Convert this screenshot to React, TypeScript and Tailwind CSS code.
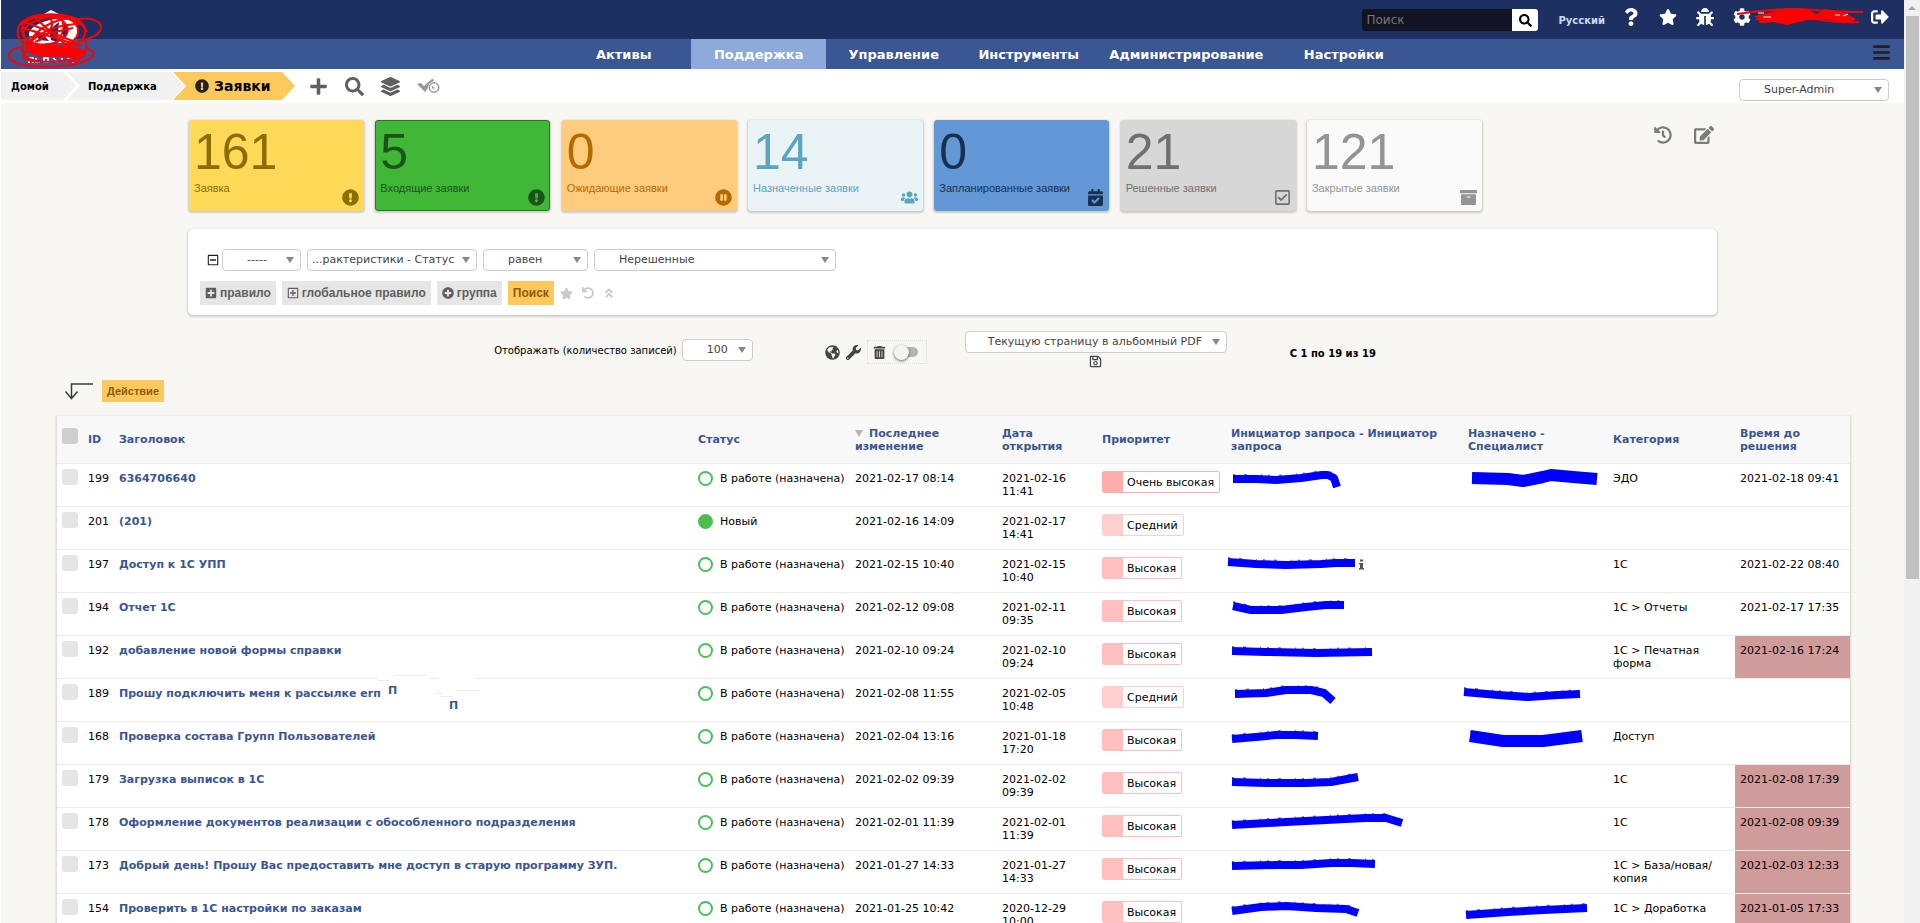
import type { ReactNode } from "react";
import {
  FaAngleDoubleUp, FaArchive, FaBars, FaBug, FaCalendarCheck, FaCog, FaEdit, FaExclamationCircle, FaGlobeAmericas,
  FaHistory, FaLayerGroup, FaPauseCircle, FaPlus, FaPlusCircle, FaPlusSquare, FaQuestion, FaRegCheckSquare,
  FaRegMinusSquare, FaRegPlusSquare, FaRegSave, FaSearch, FaSignOutAlt, FaStar, FaTrashAlt,
  FaUndo, FaUsers, FaWrench,
} from "react-icons/fa";

type Mark = { d: string; w: number; info?: number };
type Row = {
  id: number;
  title: string;
  isNew?: boolean;
  modified: string;
  opened: string;
  priority: "Очень высокая" | "Высокая" | "Средний";
  requester?: Mark;
  assignee?: Mark;
  category: string;
  due: string;
  late?: boolean;
};

const rows: Row[] = [
  { id: 199, title: "6364706640", modified: "2021-02-17 08:14", opened: "2021-02-16 11:41", priority: "Очень высокая", requester: { d: "M7 15 L30 15 L50 16 L75 14 L96 11 L102 11 L108 14 L111 23", w: 8 }, assignee: { d: "M9 14 L45 15 L60 17 L80 13 L88 11 L110 13 L134 15", w: 12 }, category: "ЭДО", due: "2021-02-18 09:41" },
  { id: 201, title: "(201)", isNew: true, modified: "2021-02-16 14:09", opened: "2021-02-17 14:41", priority: "Средний", category: "", due: "" },
  { id: 197, title: "Доступ к 1С УПП", modified: "2021-02-15 10:40", opened: "2021-02-15 10:40", priority: "Высокая", requester: { d: "M2 12 L30 14 L60 15 L95 14 L110 13 L129 13", w: 8, info: 134 }, category: "1С", due: "2021-02-22 08:40" },
  { id: 194, title: "Отчет 1С", modified: "2021-02-12 09:08", opened: "2021-02-11 09:35", priority: "Высокая", requester: { d: "M7 13 L25 17 L55 17 L80 14 L100 12 L118 12", w: 8 }, category: "1С > Отчеты", due: "2021-02-17 17:35" },
  { id: 192, title: "добавление новой формы справки", modified: "2021-02-10 09:24", opened: "2021-02-10 09:24", priority: "Высокая", requester: { d: "M6 15 L40 16 L90 17 L146 16", w: 8 }, category: "1С > Печатная форма", due: "2021-02-16 17:24", late: true },
  { id: 189, title: "Прошу подключить меня к рассылке erп", modified: "2021-02-08 11:55", opened: "2021-02-05 10:48", priority: "Средний", requester: { d: "M9 15 L40 14 L60 11 L85 11 L98 14 L107 22", w: 8 }, assignee: { d: "M1 13 L35 16 L65 18 L95 16 L117 15", w: 8 }, category: "", due: "" },
  { id: 168, title: "Проверка состава Групп Пользователей", modified: "2021-02-04 13:16", opened: "2021-01-18 17:20", priority: "Высокая", requester: { d: "M6 17 L30 15 L50 13 L70 13 L92 14", w: 8 }, assignee: { d: "M7 14 L40 19 L80 19 L119 14", w: 12 }, category: "Доступ", due: "" },
  { id: 179, title: "Загрузка выписок в 1С", modified: "2021-02-02 09:39", opened: "2021-02-02 09:39", priority: "Высокая", requester: { d: "M6 17 L40 18 L80 18 L105 17 L132 12", w: 8 }, category: "1С", due: "2021-02-08 17:39", late: true },
  { id: 178, title: "Оформление документов реализации с обособленного подразделения", modified: "2021-02-01 11:39", opened: "2021-02-01 11:39", priority: "Высокая", requester: { d: "M6 17 L60 14 L100 12 L140 10 L160 10 L176 15", w: 8 }, category: "1С", due: "2021-02-08 09:39", late: true },
  { id: 173, title: "Добрый день! Прошу Вас предоставить мне доступ в старую программу ЗУП.", modified: "2021-01-27 14:33", opened: "2021-01-27 14:33", priority: "Высокая", requester: { d: "M6 15 L50 14 L75 14 L105 12 L125 12 L149 13", w: 8 }, category: "1С > База/новая/копия", due: "2021-02-03 12:33", late: true },
  { id: 154, title: "Проверить в 1С настройки по заказам", modified: "2021-01-25 10:42", opened: "2020-12-29 10:00", priority: "Высокая", requester: { d: "M6 17 L35 13 L60 12 L90 14 L120 15 L132 19", w: 8 }, assignee: { d: "M3 21 L45 18 L80 16 L124 14", w: 8 }, category: "1С > Доработка", due: "2021-01-05 17:33", late: true },
];

const cards = [
  { n: "161", label: "Заявка", icon: FaExclamationCircle, cls: "bg-[#ffd957] border-[#ffd957] text-[#8c6d00]" },
  { n: "5", label: "Входящие заявки", icon: FaExclamationCircle, cls: "bg-[#41b738] border-[#217a1c] text-[#1c5319]" },
  { n: "0", label: "Ожидающие заявки", icon: FaPauseCircle, cls: "bg-[#ffcb7d] border-[#ffcb7d] text-[#b36b00]" },
  { n: "14", label: "Назначенные заявки", icon: FaUsers, cls: "bg-[#eaf4f7] border-[#eaf4f7] text-[#58a6c1]" },
  { n: "0", label: "Запланированные заявки", icon: FaCalendarCheck, cls: "bg-[#6298d5] border-[#6298d5] text-[#17304f]" },
  { n: "21", label: "Решенные заявки", icon: FaRegCheckSquare, cls: "bg-[#d7d7d7] border-[#d7d7d7] text-[#707070]" },
  { n: "121", label: "Закрытые заявки", icon: FaArchive, cls: "bg-[#fafafa] border-[#fafafa] text-[#949494]" },
];

const nav = ["Активы", "Поддержка", "Управление", "Инструменты", "Администрирование", "Настройки"];

const priorityStyle = {
  "Очень высокая": { border: "border-[#ffadad]", fill: "bg-[#ffadad]" },
  "Высокая": { border: "border-[#ffbfbf]", fill: "bg-[#ffbfbf]" },
  "Средний": { border: "border-[#ffcfcf]", fill: "bg-[#ffcfcf]" },
};

function Select({ label, value, width, pad = "pl-[24px]" }: { label: string; value: string; width: string; pad?: string }) {
  return (
    <span className={`relative block shrink-0 ${width}`}>
      <select aria-label={label} className={`h-[22px] w-full appearance-none rounded-[4px] border border-[#ccc] bg-white text-[11px] text-[#444] ${pad}`}>
        <option>{value}</option>
      </select>
      <span className="pointer-events-none absolute top-[8px] right-[7px] border-x-[4px] border-t-[6px] border-x-transparent border-t-[#888]" />
    </span>
  );
}

function GreyButton({ children }: { children: ReactNode }) {
  return (
    <button className="flex h-6 items-center gap-[3px] bg-[#e6e6e6] px-[5px] font-['Liberation_Sans',sans-serif] text-[12px] font-bold text-[#5f5f5f]">
      {children}
    </button>
  );
}

function Scribble({ mark }: { mark?: Mark }) {
  if (!mark) return null;
  return (
    <svg className="block overflow-visible" width="130" height="30" aria-hidden="true">
      <path d={mark.d} transform="translate(0 -4)" fill="none" stroke="#777" strokeWidth="2" strokeDasharray="2 9 3 14 1 6" />
      <path d={mark.d} fill="none" stroke="#0000ff" strokeWidth={mark.w} strokeLinejoin="round" />
      {mark.info && <path d={`M${mark.info} 9.500h3v2h-3zM${mark.info - 1} 13h4v5h1v1.500h-5v-1.500h1v-3.500h-1z`} fill="#555" />}
    </svg>
  );
}

function Logo() {
  return (
    <svg className="absolute top-0 left-0" width="110" height="70" viewBox="0 0 110 70" aria-label="Логотип">
      <path d="M43 14 L50 10 L58 14Z" fill="#fff" />
      <path d="M28 33 C32 20 68 14 74 22 C78 28 77 38 72 42 L38 44 C30 42 28 38 28 33Z" fill="#fff" />
      <path d="M33 30 L42 34 L48 41 L38 40Z M48 30 L58 22 L56 42 L50 40Z M62 24h4v12h-4z" fill="#1e2f61" />
      <path d="M28 63v-5h4v5M35 58v4h4M43 58h4v4h-4zM52 58l5 4M61 58v4M66 59h4M72 59v4" fill="none" stroke="#fff" strokeWidth="1.500" />
      <path d="M24 45 L62 45 L83 50 L80 57 L38 57 L26 52Z" fill="#f00" />
      <g fill="none" stroke="#f00" strokeWidth="2">
        <path d="M17 30 C18 12 60 11 75 19 C90 27 88 44 60 48 C32 50 14 43 17 30" />
        <path d="M21 33 C17 18 48 10 70 20 C84 29 78 46 50 47 C32 46 24 42 21 33" />
        <path d="M74 20 C88 16 101 21 100 28 C99 34 92 38 80 41" />
        <path d="M19 25 C30 14 60 14 66 26 C72 40 44 50 29 42 C15 34 25 20 50 17 C70 16 82 22 86 32" />
        <path d="M24 22 L74 42 M22 28 L80 46 M30 40 C40 24 60 18 74 18 M28 44 C42 28 62 24 82 24" />
        <path d="M34 18 L64 44 M46 15 C58 24 46 38 34 42 M60 18 C66 28 60 40 50 46 M26 38 L72 28" />
        <path d="M22 47 C8 48 5 56 11 61 C26 69 66 68 82 62 C96 56 96 50 84 49" />
        <path d="M22 44 C18 58 32 64 60 61 C82 58 92 50 70 48 C40 46 22 48 22 56 C24 64 50 62 76 60" />
        <path d="M20 42 L86 52 M26 50 L78 44 M84 40 C88 52 84 60 68 62" />
      </g>
    </svg>
  );
}

function TitleTraces() {
  return (
    <>
      <svg className="absolute top-0 left-0 overflow-visible" width="380" height="43" aria-hidden="true">
        <rect x="264" y="-2" width="98" height="3" fill="#fff" />
        <path d="M280 -3.500h32M264 1.500h13M315 -0.500h9M322 14.500h6M326 17.500h12M342 11.500h24" stroke="#ebebeb" strokeWidth="1" />
      </svg>
      <span className="absolute top-[5px] left-[274px]">П</span>
      <span className="absolute top-[20px] left-[335px]">П</span>
    </>
  );
}

export default function App() {
  return (
    <div className="flex h-screen w-full overflow-hidden border-l border-white bg-[#f8f7f3] font-['DejaVu_Sans',Verdana,sans-serif] text-[11px] text-black">
      <div className="min-w-0 flex-1 overflow-hidden">
        <header className="relative">
          <div className="flex h-[39px] items-start justify-end bg-[#1e2f61] pr-[15px] text-white">
            <form className="mt-[9px] flex h-[22px] w-[176px]">
              <input aria-label="Поиск" placeholder="Поиск" className="min-w-0 flex-1 rounded-l-[3px] bg-[#121425] px-1 text-[12px] placeholder:text-[#777]" />
              <button aria-label="Найти" type="button" className="flex w-[26px] items-center justify-center rounded-r-[3px] bg-white text-black"><FaSearch size={13} /></button>
            </form>
            <a href="#lang" className="mt-[13px] ml-5 text-[10px] leading-[15px] font-bold text-[#ced9f5]">Русский</a>
            <div className="mt-2 ml-[17px] flex items-center gap-[19px]">
              <a href="#help" aria-label="Справка"><FaQuestion size={18} /></a>
              <a href="#saved" aria-label="Закладки"><FaStar size={18} /></a>
              <a href="#debug" aria-label="Отладка"><FaBug size={18} /></a>
              <a href="#preferences" aria-label="Параметры" className="relative flex w-[119px]">
                <FaCog size={18} />
                <svg className="absolute top-[-1px] left-0" width="134" height="20" viewBox="0 0 134 20" aria-hidden="true">
                  <path d="M22 13 L30 7 L55 1 L75 3 L84 7 L92 2 L112 6 L122 12 L118 16 L90 12 L74 13 L54 18 L36 14Z" fill="#f00" />
                  <path d="M4 7 C30 3 60 1 80 3 C96 4 112 5 130 5 M22 10 C50 2 90 18 126 15 M26 15 C60 14 90 4 122 12" fill="none" stroke="#f00" strokeWidth="2" />
                  <path d="M25 6h6M30 10h8M102 8h5M110 9l5-2" stroke="#fff" strokeWidth="1" />
                </svg>
              </a>
              <a href="#logout" aria-label="Выход"><FaSignOutAlt size={18} /></a>
            </div>
          </div>
          <nav className="flex h-[30px] items-stretch bg-[#3a5693] pr-[13px] text-[13px] font-bold text-white">
            <div className="ml-[28%] flex shrink-0 pl-[26px]">
              {nav.map((n) => (
                <a key={n} href="#nav" className={`flex min-w-[135px] items-center justify-center px-[13px] pt-px ${n === "Поддержка" ? "bg-[#8eaadb]" : ""}`}>{n}</a>
              ))}
            </div>
            <button aria-label="Меню" className="ml-auto pb-1 text-[#1f1f1f]"><FaBars size={19} /></button>
          </nav>
          <Logo />
        </header>

        <div className="flex h-[34px] items-center bg-white pr-[15px]">
          <a href="#home" className="flex h-7 w-[75px] items-center bg-[#f1f1f1] pl-[10px] text-[10px] font-bold [clip-path:polygon(0_0,62px_0,100%_50%,62px_100%,0_100%)]">Домой</a>
          <a href="#support" className="-ml-[9px] flex h-7 w-[117px] items-center bg-[#f1f1f1] pl-[21px] text-[10px] font-bold [clip-path:polygon(0_0,104px_0,100%_50%,104px_100%,0_100%,13px_50%)]">Поддержка</a>
          <a href="#tickets" className="-ml-[11px] flex h-7 w-[122px] items-center gap-[5px] bg-[#fec95c] pl-[22px] text-[14px] font-bold [clip-path:polygon(0_0,109px_0,100%_50%,109px_100%,0_100%,13px_50%)]">
            <FaExclamationCircle size={14} className="shrink-0 text-[#222]" />Заявки
          </a>
          <div className="ml-[14px] flex items-center gap-[17px] text-[#606060]">
            <button aria-label="Добавить"><FaPlus size={19} /></button>
            <button aria-label="Искать"><FaSearch size={19} /></button>
            <button aria-label="Шаблоны"><FaLayerGroup size={19} /></button>
            <button aria-label="Массовая проверка">
              <svg width="23" height="16" viewBox="0 0 23 16" fill="none" stroke="#999" strokeWidth="1.500">
                <path d="M0 6 L4 5 L7 8 L15 1 L17 2 L8 14Z" fill="#999" stroke="none" />
                <circle cx="17" cy="9.500" r="6" fill="#fff" stroke="none" />
                <circle cx="17" cy="9.500" r="4.700" />
                <path d="M15.500 8v2h2.500M9 7L16 1.500" strokeWidth="1.200" />
              </svg>
            </button>
          </div>
          <div className="ml-auto pt-[8px]"><Select label="Профиль" value="Super-Admin" width="w-[150px]" /></div>
        </div>

        <main className="pt-[17px]">
          <section className="mx-auto flex w-full max-w-[1529px] items-start pr-[3px]">
            <div className="flex w-[1294px] justify-between pl-[1px]">
              {cards.map((c) => (
                <a key={c.label} href="#card" className={`relative block h-[91px] w-[175px] rounded-[3px] border pl-1 font-['Liberation_Sans',sans-serif] shadow-[0_1px_2px_1px_rgba(0,0,0,0.18)] ${c.cls}`}>
                  <span className="block pt-[5px] text-[50px] leading-[52px]">{c.n}</span>
                  <span className="block pt-[2px] text-[11px] leading-4">{c.label}</span>
                  <c.icon className="absolute right-1 bottom-[4px]" size={17} />
                </a>
              ))}
            </div>
            <div className="ml-auto flex gap-[22px] pt-[5px] text-[#7b7b7b]">
              <button aria-label="История"><FaHistory size={18} /></button>
              <button aria-label="Изменить"><FaEdit size={20} /></button>
            </div>
          </section>

          <section className="mx-auto mt-[18px] w-full max-w-[1529px] rounded-[5px] bg-white px-3 pt-5 pb-[10px] shadow-[0_1px_2px_1px_rgba(0,0,0,0.16)]">
            <div className="flex items-center gap-[6px] pl-[7px]">
              <button aria-label="Удалить правило" className="-mr-[3px] text-[#222]"><FaRegMinusSquare size={12} /></button>
              <Select label="Логика" value="-----" width="w-[79px]" />
              <Select label="Поле" value="...рактеристики - Статус" width="w-[170px]" pad="pl-[4px]" />
              <Select label="Условие" value="равен" width="w-[105px]" />
              <Select label="Значение" value="Нерешенные" width="w-[242px]" />
            </div>
            <div className="mt-[10px] flex items-center gap-[6px]">
              <GreyButton><FaPlusSquare size={12} />правило</GreyButton>
              <GreyButton><FaRegPlusSquare size={12} />глобальное правило</GreyButton>
              <GreyButton><FaPlusCircle size={12} />группа</GreyButton>
              <button className="h-6 bg-[#fec95c] px-[5px] font-['Liberation_Sans',sans-serif] text-[12px] font-bold text-[#8f5a0a]">Поиск</button>
              <div className="flex items-center gap-[9px] text-[#c9c9c9]">
                <button aria-label="В закладки"><FaStar size={13} /></button>
                <button aria-label="Сбросить"><FaUndo size={12} /></button>
                <button aria-label="Свернуть"><FaAngleDoubleUp size={12} /></button>
              </div>
            </div>
          </section>

          <section className="mt-4 flex items-start justify-center pr-[35px]">
            <div className="mt-2 flex items-center gap-[5px] text-[10px]">
              <span>Отображать (количество записей)</span>
              <Select label="Количество записей" value="100" width="w-[71px]" />
            </div>
            <div className="mt-[9px] ml-[72px] flex items-center gap-[6px] text-[#444]">
              <FaGlobeAmericas size={15} />
              <FaWrench size={15} />
              <label className="relative flex h-6 items-center gap-[8px] border border-dotted border-[#ddd] pr-2 pl-[5px]">
                <FaTrashAlt size={13} />
                <input type="checkbox" role="switch" aria-label="Показать удаленные" className="peer sr-only" />
                <span className="flex h-[10px] w-6 items-center rounded-full bg-linear-to-r from-transparent from-30% to-[#b5b5b5] to-30%">
                  <span className="h-[15px] w-[15px] rounded-full bg-[#f4f4f4] shadow-[0_1px_3px_rgba(0,0,0,0.6)]" />
                </span>
              </label>
            </div>
            <div className="ml-[38px] flex flex-col items-center gap-[2px]">
              <Select label="Экспорт" value="Текущую страницу в альбомный PDF" width="w-[262px]" pad="pl-[22px]" />
              <button aria-label="Сохранить" className="text-[#444]"><FaRegSave size={13} /></button>
            </div>
            <span className="mt-[15px] ml-[63px] text-[10px] leading-[15px] font-bold">С 1 по 19 из 19</span>
          </section>

          <div className="mt-3 flex items-center gap-[9px] pl-[63px]">
            <svg width="29" height="18" viewBox="0 0 29 18" fill="none" stroke="#3c3c3c" strokeWidth="1.500" aria-hidden="true">
              <path d="M29 2H7.500V16M1.500 9.500L7.500 16.500L13.500 9.500" />
            </svg>
            <button className="h-[22px] bg-[#fec95c] px-[5px] font-['Liberation_Sans',sans-serif] text-[11px] font-bold text-[#8f5a0a]">Действие</button>
          </div>

          <div className="mt-[14px] mr-[54px] ml-[56px] shadow-[0_1px_2px_1px_rgba(0,0,0,0.14)]">
            <table className="w-full table-fixed border-separate border-spacing-0 bg-white text-left leading-[13px]">
              <colgroup>
                <col className="w-[26px]" /><col className="w-[31px]" /><col /><col className="w-[157px]" /><col className="w-[147px]" />
                <col className="w-[100px]" /><col className="w-[129px]" /><col className="w-[237px]" /><col className="w-[145px]" />
                <col className="w-[127px]" /><col className="w-[115px]" />
              </colgroup>
              <thead>
                <tr className="h-12 bg-[#f8f8f8] text-[#3a5693] [&>th]:border-b [&>th]:border-[#ebebeb] [&>th]:px-[5px]">
                  <th className="align-top"><input type="checkbox" aria-label="Выбрать все" className="mt-3 block h-4 w-4 appearance-none rounded-[3px] bg-[#cecece]" /></th>
                  <th>ID</th>
                  <th>Заголовок</th>
                  <th>Статус</th>
                  <th><span className="mr-[6px] inline-block border-x-[4px] border-t-[7px] border-x-transparent border-t-[#b5b5b5]" />Последнее<br />изменение</th>
                  <th>Дата<br />открытия</th>
                  <th>Приоритет</th>
                  <th>Инициатор запроса - Инициатор запроса</th>
                  <th>Назначено - Специалист</th>
                  <th>Категория</th>
                  <th>Время до решения</th>
                </tr>
              </thead>
              <tbody>
                {rows.map((r) => (
                  <tr key={r.id} className="h-[43px] align-top [&>td]:border-b [&>td]:border-[#ebebeb]">
                    <td className="px-[5px] pt-[5px]"><input type="checkbox" aria-label={`Выбрать ${r.id}`} className="block h-4 w-4 appearance-none rounded-[3px] bg-[#e5e5e5]" /></td>
                    <td className="px-[5px] pt-2">{r.id}</td>
                    <td className="relative px-[5px] pt-2 font-bold text-[#3a5693]">
                      <a href="#ticket">{r.title}</a>
                      {r.id === 189 && <TitleTraces />}
                    </td>
                    <td className="px-[5px] pt-[7px] whitespace-nowrap">
                      <span className="flex items-center gap-[7px]">
                        <span className={`h-[15px] w-[15px] shrink-0 rounded-full border-2 border-[#4cbf5b] ${r.isNew ? "bg-[#49bf4d]" : ""}`} />
                        {r.isNew ? "Новый" : "В работе (назначена)"}
                      </span>
                    </td>
                    <td className="px-[5px] pt-2">{r.modified}</td>
                    <td className="px-[5px] pt-2">{r.opened}</td>
                    <td className="px-[5px] pt-[7px] whitespace-nowrap">
                      <span className={`flex h-[22px] w-fit items-stretch overflow-hidden rounded-[2px] border ${priorityStyle[r.priority].border}`}>
                        <span className={`w-5 ${priorityStyle[r.priority].fill}`} />
                        <span className="flex items-center pr-[5px] pl-1">{r.priority}</span>
                      </span>
                    </td>
                    <td><Scribble mark={r.requester} /></td>
                    <td><Scribble mark={r.assignee} /></td>
                    <td className="px-[5px] pt-2 [overflow-wrap:anywhere]">{r.category.replace("новая/", "новая/\u200b")}</td>
                    <td className={`px-[5px] pt-2 whitespace-nowrap ${r.late ? "bg-[#cf9b9b]" : ""}`}>{r.due}</td>
                  </tr>
                ))}
              </tbody>
            </table>
          </div>
        </main>
      </div>

      <div aria-hidden="true" className="flex w-4 shrink-0 flex-col items-center bg-[#f1f1f1]">
        <span className="mt-[6px] mb-[6px] border-x-[4px] border-b-[4px] border-x-transparent border-b-[#a3a3a3]" />
        <span className="h-[61%] w-[13px] bg-[#c1c1c1]" />
      </div>
    </div>
  );
}
